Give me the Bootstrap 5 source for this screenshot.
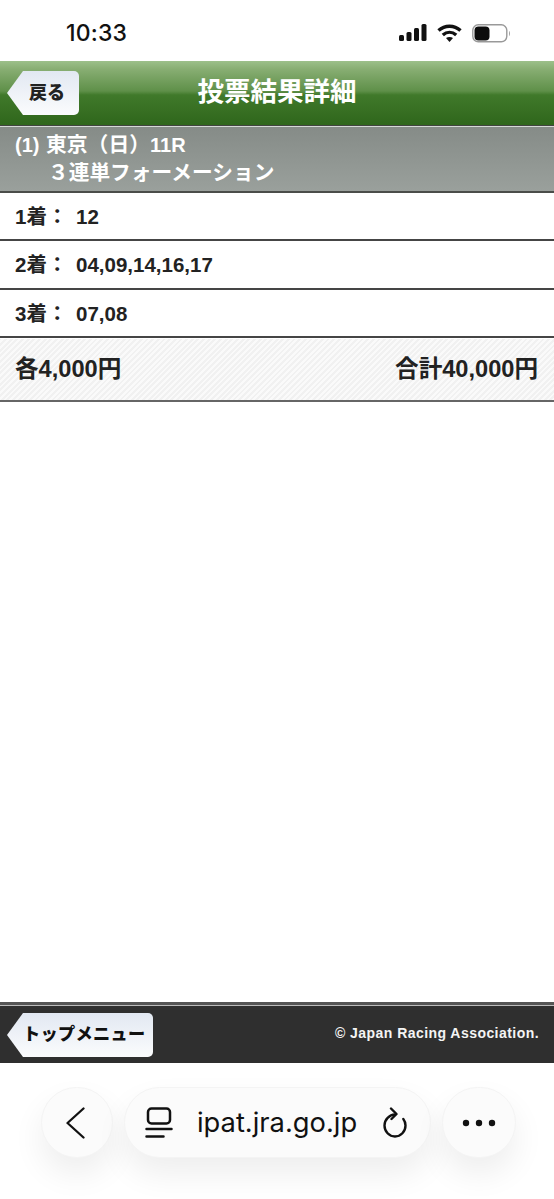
<!DOCTYPE html>
<html lang="ja">
<head>
<meta charset="utf-8">
<title>投票結果詳細</title>
<link rel="stylesheet" href="https://cdn.jsdelivr.net/npm/bootstrap@5.3.0/dist/css/bootstrap.min.css">
<style>
html,body{margin:0;height:1199px;overflow:hidden}
body{font-family:"Liberation Sans","Noto Sans CJK JP",sans-serif;background:#fff;color:#222}
.page{height:1199px}
.statusbar{height:61px;padding:19px 42px 0 66px;background:#fff;color:#111}
.clock{font:500 23px/28px Inter,sans-serif;letter-spacing:.2px}
.status-icons{gap:10px;padding-top:5px}
.headbar{height:64px;padding:10px 7px;background:linear-gradient(#9cc08a 0,#88ae73 8px,#5f9049 30px,#40792a 34px,#2f661b 64px);box-sizing:border-box}
.backbtn{height:44px;font-weight:700;color:#222;text-decoration:none;background:linear-gradient(#e2e8f2,#fbfcfd);border-radius:5px;clip-path:polygon(0 50%,16px 0,100% 0,100% 100%,16px 100%);flex:none}
.back-top{width:72px;padding-left:22px;font-size:18px;font-weight:900}
.headtitle{position:absolute;left:0;right:0;top:0;line-height:62px;text-align:center;color:#fff;font-size:26.5px;font-weight:700;pointer-events:none}
.headwrap{position:relative}
.racebar{height:68px;background:linear-gradient(#858b87,#9aa09c);border-top:1px solid #41443f;border-bottom:2px solid #4a4d4a;box-shadow:inset 0 1px 0 #d5d9d6;color:#fff;font-weight:700;font-size:20px;line-height:27px;padding:5px 0 0 15px;box-sizing:border-box}
.race-cjk{font-size:20.8px;margin-left:1px}
.race-sub{padding-left:33px;font-size:20.7px}
.betrow{height:48.3px;border-bottom:2px solid #454545;padding-left:15px;font-weight:700;font-size:20.5px;line-height:48px;box-sizing:border-box;color:#222}
.betlabel{width:61px}
.sumrow{height:64px;padding:2px 16px 0 15px;font-weight:700;font-size:23.6px;color:#222;background:repeating-linear-gradient(135deg,#f1f1f1 0,#f1f1f1 2px,#fafafa 2px,#fafafa 4px);border-bottom:2px solid #666;box-shadow:inset 0 1px 0 #fff;box-sizing:border-box}
.spacer{flex:1 1 auto;background:#fff}
.footbar{height:61px;background:#2f2f2f;border-top:3px solid #555;box-shadow:inset 0 1px 0 #bbb;padding:8px 15px 0 7px;box-sizing:border-box}
.back-bottom{width:146px;padding-left:16px;font-size:17.2px;font-weight:900;color:#111;white-space:nowrap;letter-spacing:.3px}
.copyright{color:#f4f4f4;font-weight:700;font-size:14px;letter-spacing:.45px;padding-bottom:9px}
.browserbar{height:136px;padding:24px 38px 0 41px;background:#fff;box-sizing:border-box;gap:11px}
.floatbtn{height:71px;background:#fbfbfb;border:1px solid #f4f4f4;border-radius:36px;box-shadow:0 16px 32px rgba(0,0,0,.07)}
.roundbtn{width:72px;flex:none}
.roundbtn-wide{width:74px}
.urlpill{flex:1 1 auto;padding:0 20px;gap:24px}
.urltext{font:400 27.3px/30px Inter,sans-serif;color:#111;flex:1 1 auto;white-space:nowrap}
</style>
</head>
<body>
<div class="page d-flex flex-column">
  <div class="statusbar d-flex justify-content-between align-items-start">
    <div class="clock">10:33</div>
    <div class="status-icons d-flex align-items-start">
      <svg width="28" height="18" viewBox="0 0 28 18"><g fill="#111"><rect x="0" y="11" width="5" height="6" rx="1.500"/><rect x="7.500" y="8" width="5" height="9" rx="1.500"/><rect x="15" y="4" width="5" height="13" rx="1.500"/><rect x="22.500" y="0" width="5" height="17" rx="1.500"/></g></svg>
      <svg width="25" height="18" viewBox="0 0 25 18"><g fill="none" stroke="#111" stroke-width="3.400"><path d="M1.500 6.500C7.800.8 17.200.8 23.500 6.500"/><path d="M5.800 11C9.800 7.500 15.200 7.500 19.200 11"/></g><path d="M9 14C11 12.500 14 12.500 16 14L12.500 18Z" fill="#111"/></svg>
      <svg width="40" height="19" viewBox="0 0 40 19"><rect x=".8" y=".8" width="34" height="17" rx="5.500" fill="#fff" stroke="#999" stroke-width="1.400"/><rect x="2.500" y="2.500" width="15" height="14" rx="4" fill="#0c0c0c"/><path d="M37 7c1.200.5 1.200 4.500 0 5z" fill="#999"/></svg>
    </div>
  </div>

  <div class="headbar headwrap d-flex align-items-start">
    <a class="backbtn back-top d-flex align-items-center" href="#">戻る</a>
    <div class="headtitle">投票結果詳細</div>
  </div>

  <div class="racebar">
    <div>(1) <span class="race-cjk">東京（日）</span>11R</div>
    <div class="race-sub">３連単フォーメーション</div>
  </div>

  <div class="betrow d-flex"><span class="betlabel">1着：</span><span>12</span></div>
  <div class="betrow d-flex"><span class="betlabel">2着：</span><span>04,09,14,16,17</span></div>
  <div class="betrow d-flex"><span class="betlabel">3着：</span><span>07,08</span></div>

  <div class="sumrow d-flex justify-content-between align-items-center">
    <span>各4,000円</span><span>合計40,000円</span>
  </div>

  <div class="spacer"></div>

  <div class="footbar d-flex justify-content-between align-items-start">
    <a class="backbtn back-bottom d-flex align-items-center" href="#">トップメニュー</a>
    <div class="copyright align-self-center">© Japan Racing Association.</div>
  </div>

  <div class="browserbar d-flex align-items-start">
    <div class="floatbtn roundbtn d-flex align-items-center justify-content-center">
      <svg width="22" height="34" viewBox="0 0 22 34"><path d="M17.500 2.500 1.500 17l16 14.500" fill="none" stroke="#111" stroke-width="2.300" stroke-linecap="round" stroke-linejoin="round"/></svg>
    </div>
    <div class="floatbtn urlpill d-flex align-items-center">
      <svg width="28" height="32" viewBox="0 0 28 32"><g fill="none" stroke="#111" stroke-width="2.500" stroke-linecap="round"><rect x="3" y="1.500" width="22" height="15" rx="3.500"/><path d="M1.500 22h25M1.500 29.500h17"/></g></svg>
      <span class="urltext">ipat.jra.go.jp</span>
      <svg width="28" height="32" viewBox="0 0 28 32"><g fill="none" stroke="#111" stroke-width="2.400" stroke-linecap="round" stroke-linejoin="round"><path d="M13 7.500C7.400 7.800 2.500 12.300 2.500 18.500 2.500 24.600 7.200 29.500 13 29.500s10.500-4.900 10.500-11c0-2.600-.8-4.700-2.200-6.500"/><path d="M9 1.500 14.500 7 9.500 12"/></g></svg>
    </div>
    <div class="floatbtn roundbtn roundbtn-wide d-flex align-items-center justify-content-center">
      <svg width="34" height="8" viewBox="0 0 34 8"><g fill="#111"><circle cx="4" cy="4" r="3.200"/><circle cx="17" cy="4" r="3.200"/><circle cx="30" cy="4" r="3.200"/></g></svg>
    </div>
  </div>
</div>
<script src="https://cdn.jsdelivr.net/npm/bootstrap@5.3.0/dist/js/bootstrap.bundle.min.js"></script>
</body>
</html>
